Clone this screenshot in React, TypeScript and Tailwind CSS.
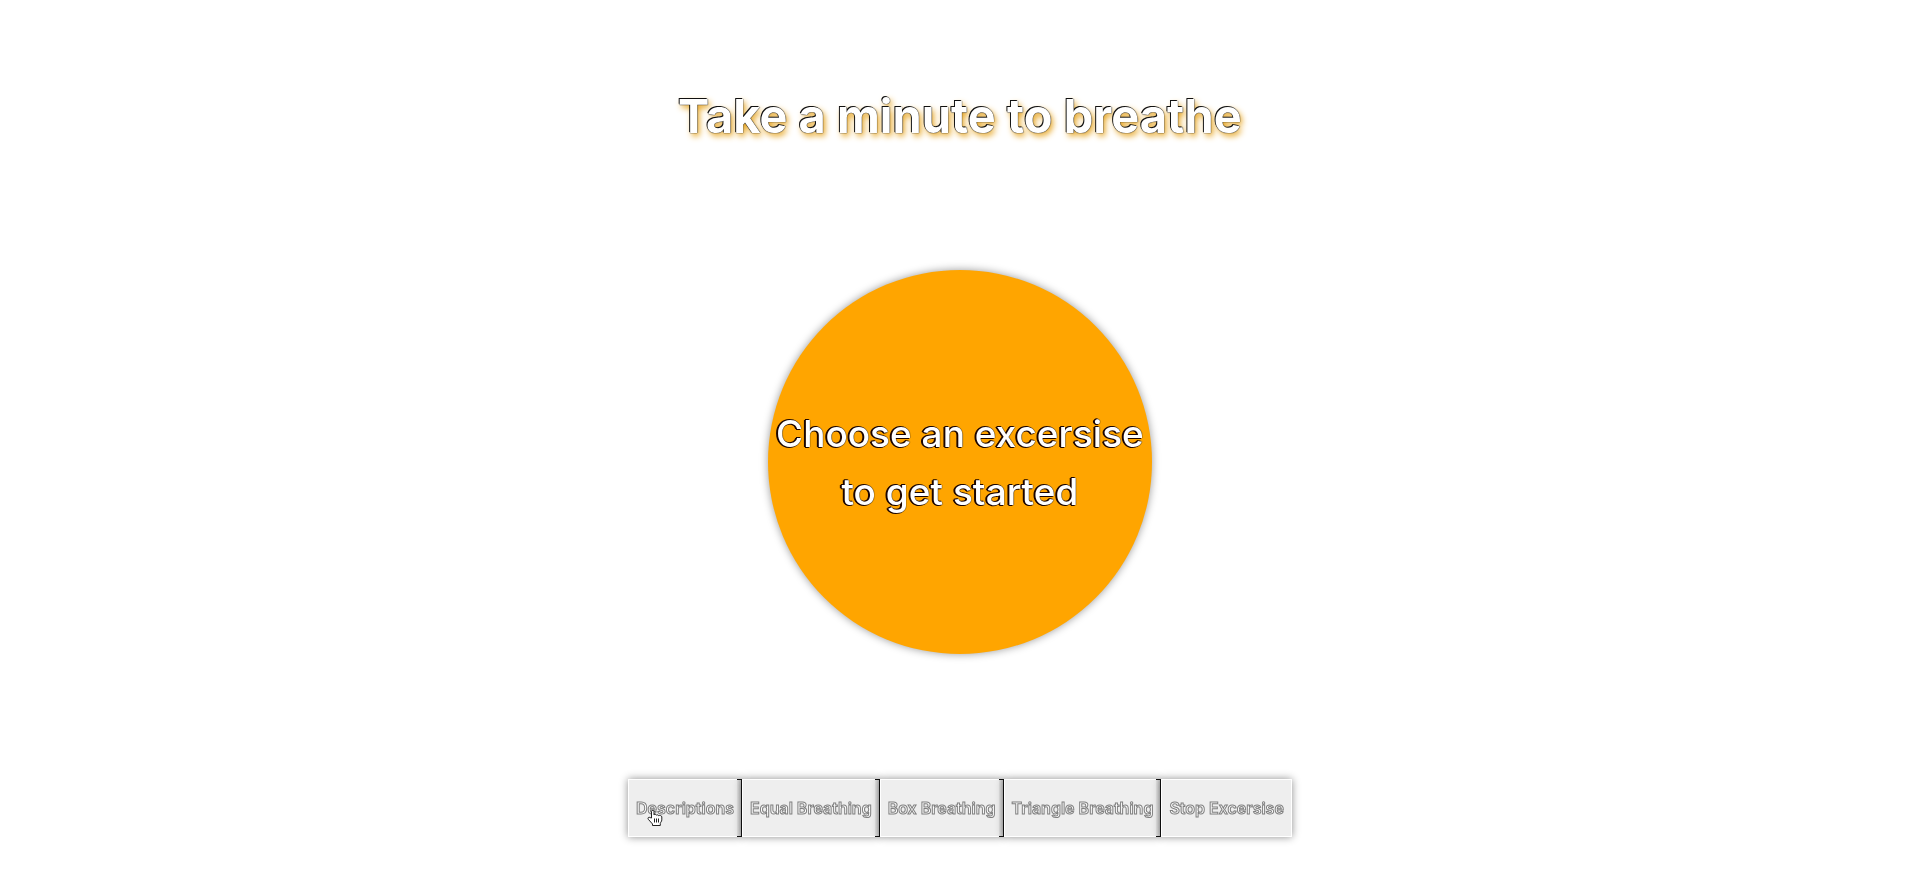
const exercises = [
  "Descriptions",
  "Equal Breathing",
  "Box Breathing",
  "Triangle Breathing",
  "Stop Excersise",
];

function HandPointer() {
  return (
    <svg
      className="pointer-events-none absolute top-[30px] left-[18px] h-4 w-4"
      viewBox="0 0 16 16"
      fill="#fff"
      stroke="#222"
      strokeWidth="1"
      strokeLinejoin="round"
      aria-hidden="true"
    >
      <path d="M4.500 8V1.500C4.500 0 7 0 7 1.500V5c.4-.8 2-.8 2.300.2.500-.7 2-.5 2.300.5.800-.6 3.200-.2 3.200 1.200v3c0 1.600-1.500 2.600-1.500 3.600v2H5.500v-1.500L1.300 9.300c-1-1.500.6-2.700 1.800-1.700z" />
      <path d="M7.500 8.500v4M9.500 8.500v4M11.500 8.500v4" />
    </svg>
  );
}

export default function App() {
  return (
    <main className="flex min-h-screen flex-col items-center bg-white px-4 pt-20 pb-12 font-['Inter',sans-serif]">
      <h1 className="text-center text-[47px] leading-[72px] font-bold text-white will-change-transform [text-shadow:-1px_-1px_0_#111,0_0_1px_#000,0_0_1px_#000,2px_3px_6px_#e6a117]">
        Take a minute to breathe
      </h1>

      <section className="mt-[118px] flex size-96 items-center justify-center rounded-full bg-[#ffa500] text-center shadow-[0_0_8px_rgba(0,0,0,0.4)]">
        <p className="pt-0.5 text-[37px] leading-[58px] font-medium whitespace-nowrap text-white will-change-transform [text-shadow:-2px_0_0_#1c0500,-1px_-1px_0_#1c0500,-1px_1px_0_#1c0500,0_0_1px_#000,0_0_1px_#000]">
          Choose an excersise
          <br />
          to get started
        </p>
      </section>

      <nav className="mt-[125px] flex will-change-transform" aria-label="Breathing exercises">
        {exercises.map((name) => (
          <button
            key={name}
            type="button"
            className="group relative h-[58px] cursor-pointer border border-white bg-[#eee] px-[7px] text-base font-semibold whitespace-nowrap text-white shadow-[0_0_8px_rgba(0,0,0,0.45)] [-webkit-text-stroke:1px_#808080]"
          >
            {name}
            {name === "Descriptions" && <HandPointer />}
            <span className="absolute -inset-y-px -right-px w-[5px] border-y border-r border-[#111] bg-linear-to-r from-[#e4e4e4] to-[#c4c4c4] group-last:hidden" />
          </button>
        ))}
      </nav>
    </main>
  );
}
